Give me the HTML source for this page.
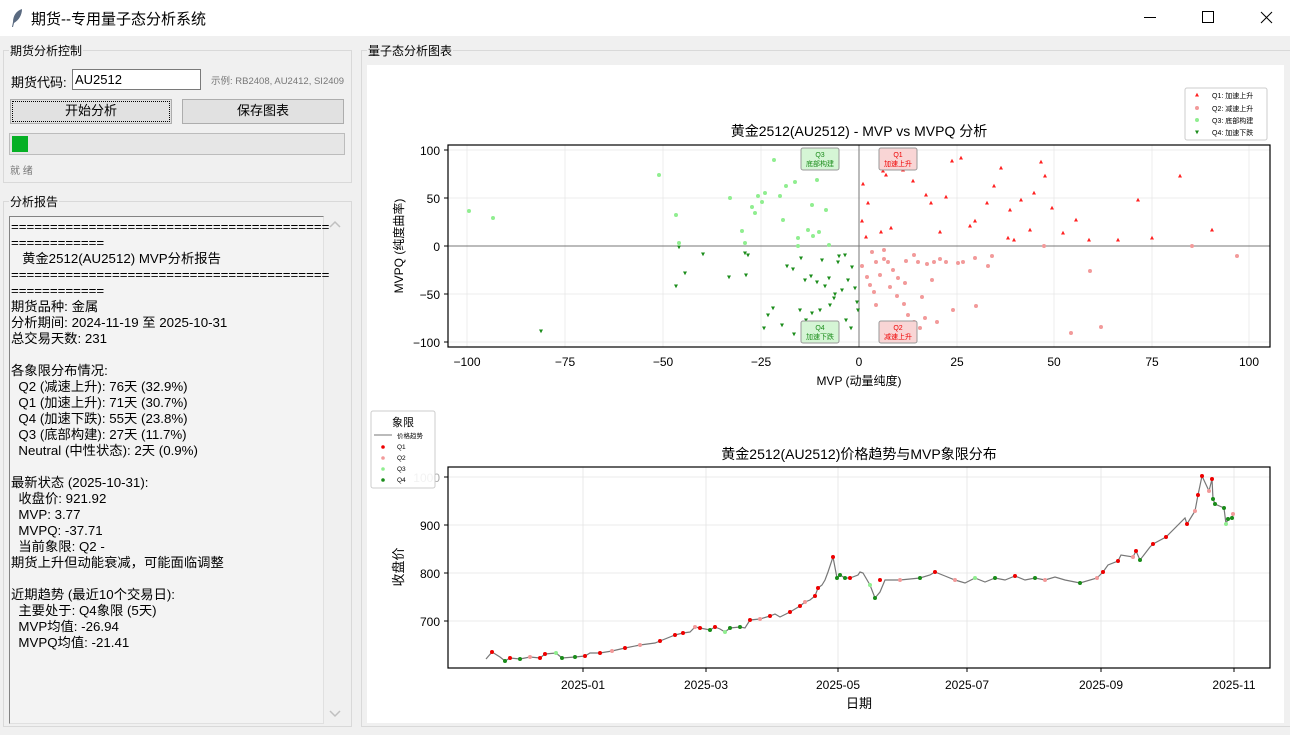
<!DOCTYPE html>
<html><head><meta charset="utf-8"><style>
*{margin:0;padding:0;box-sizing:border-box}
body{width:1290px;height:735px;background:#f0f0f0;font-family:"Liberation Sans","Noto Sans CJK SC",sans-serif;font-size:12px;color:#000;position:relative;overflow:hidden}
.abs{position:absolute}
.tb{left:0;top:0;width:1290px;height:36px;background:#fff}
.frame{border:1px solid #d9d9d9}
.lbl{background:#f0f0f0;padding:0 1px;font-size:12px}
.btn{background:#e1e1e1;border:1px solid #adadad;text-align:center;line-height:22px;font-size:13px}
.rep{font-size:13.3px;line-height:16px;white-space:pre;font-family:"Liberation Sans","Noto Sans CJK SC",sans-serif}
svg text{font-family:"Liberation Sans","Noto Sans CJK SC",sans-serif}
</style></head><body>
<div class="abs tb"></div>
<svg class="abs" style="left:10px;top:8px" width="14" height="20" viewBox="0 0 14 20"><path d="M12 1 C6 3 3 8 3 14 L2 19 L3 19 L4 15 C9 12 12 7 12 1Z" fill="#5a6a80"/></svg>
<div class="abs" style="left:31px;top:8px;font-size:15px">期货--专用量子态分析系统</div>
<svg class="abs" style="left:1140px;top:8px" width="140" height="20"><line x1="4" y1="9.5" x2="16" y2="9.5" stroke="#000"/><rect x="62.5" y="3.5" width="11" height="11" fill="none" stroke="#000"/><path d="M121 4 L132 15 M132 4 L121 15" stroke="#000"/></svg>

<!-- left control frame -->
<div class="abs frame" style="left:3px;top:50px;width:349px;height:133px"></div>
<div class="abs lbl" style="left:9px;top:42px">期货分析控制</div>
<div class="abs" style="left:11px;top:72px;font-size:13px">期货代码:</div>
<div class="abs" style="left:72px;top:69px;width:129px;height:21px;background:#fff;border:1px solid #7a7a7a;font-size:13px;line-height:19px;padding-left:2px">AU2512</div>
<div class="abs" style="left:211px;top:73px;font-size:9.5px;color:#777">示例: RB2408, AU2412, SI2409</div>
<div class="abs btn" style="left:10px;top:99px;width:162px;height:25px;outline:1px dotted #000;outline-offset:-3px">开始分析</div>
<div class="abs btn" style="left:182px;top:99px;width:162px;height:25px">保存图表</div>
<div class="abs" style="left:9px;top:133px;width:336px;height:22px;background:#e6e6e6;border:1px solid #bcbcbc"></div>
<div class="abs" style="left:12px;top:136px;width:16px;height:16px;background:#06b025"></div>
<div class="abs" style="left:10px;top:162px;font-size:10px;color:#777">就 绪</div>

<!-- report frame -->
<div class="abs frame" style="left:3px;top:201px;width:349px;height:526px"></div>
<div class="abs lbl" style="left:9px;top:193px">分析报告</div>
<div class="abs" style="left:9px;top:216px;width:315px;height:508px;background:#f3f3f3;border:1px solid #838383;border-right-color:#e0e0e0;border-bottom-color:#e0e0e0"></div>
<div class="abs rep" style="left:11px;top:219px">=========================================
============
   黄金2512(AU2512) MVP分析报告
=========================================
============
期货品种: 金属
分析期间: 2024-11-19 至 2025-10-31
总交易天数: 231

各象限分布情况:
  Q2 (减速上升): 76天 (32.9%)
  Q1 (加速上升): 71天 (30.7%)
  Q4 (加速下跌): 55天 (23.8%)
  Q3 (底部构建): 27天 (11.7%)
  Neutral (中性状态): 2天 (0.9%)

最新状态 (2025-10-31):
  收盘价: 921.92
  MVP: 3.77
  MVPQ: -37.71
  当前象限: Q2 -
期货上升但动能衰减，可能面临调整

近期趋势 (最近10个交易日):
  主要处于: Q4象限 (5天)
  MVP均值: -26.94
  MVPQ均值: -21.41</div>
<svg class="abs" style="left:326px;top:218px" width="18" height="505"><path d="M4 9 L9 4 L14 9" fill="none" stroke="#c0c0c0" stroke-width="1.5"/><path d="M4 493 L9 498 L14 493" fill="none" stroke="#c0c0c0" stroke-width="1.5"/></svg>

<!-- right frame -->
<div class="abs frame" style="left:361px;top:50px;width:930px;height:677px"></div>
<div class="abs lbl" style="left:367px;top:42px">量子态分析图表</div>
<svg class="abs" style="left:367px;top:65px" width="917" height="658" viewBox="367 65 917 658">
<defs>
<path id="tu" d="M0 -2.2 L2 1.5 L-2 1.5Z" fill="#ff2020"/>
<path id="td" d="M0 2.2 L2 -1.5 L-2 -1.5Z" fill="#1a8c1a"/>
<circle id="cp" r="2" fill="#f29a9a"/>
<circle id="cg" r="2" fill="#90ee90"/>
</defs>
<rect x="367" y="65" width="917" height="658" fill="#fff"/>
<!-- chart 1 -->
<g stroke="#e8e8e8" stroke-width="0.8">
<line x1="467" y1="145" x2="467" y2="347"/><line x1="663" y1="145" x2="663" y2="347"/><line x1="761" y1="145" x2="761" y2="347"/><line x1="565" y1="145" x2="565" y2="347"/><line x1="957" y1="145" x2="957" y2="347"/><line x1="1054" y1="145" x2="1054" y2="347"/><line x1="1152" y1="145" x2="1152" y2="347"/><line x1="1249" y1="145" x2="1249" y2="347"/>
<line x1="448" y1="150" x2="1270" y2="150"/><line x1="448" y1="198" x2="1270" y2="198"/><line x1="448" y1="294" x2="1270" y2="294"/><line x1="448" y1="342" x2="1270" y2="342"/>
</g>
<line x1="448" y1="246" x2="1270" y2="246" stroke="#777"/><line x1="859" y1="145" x2="859" y2="347" stroke="#777"/>
<g>
<use href="#cg" x="469" y="211"/><use href="#cg" x="493" y="218"/><use href="#cg" x="659" y="175"/><use href="#cg" x="676" y="215"/><use href="#cg" x="679" y="243"/><use href="#cg" x="730" y="198"/><use href="#cg" x="742" y="231"/><use href="#cg" x="752" y="207"/><use href="#cg" x="755" y="213"/><use href="#cg" x="758" y="196"/><use href="#cg" x="765" y="193"/><use href="#cg" x="774" y="160"/><use href="#cg" x="780" y="196"/><use href="#cg" x="783" y="220"/><use href="#cg" x="786" y="186"/><use href="#cg" x="795" y="182"/><use href="#cg" x="798" y="238"/><use href="#cg" x="808" y="230"/><use href="#cg" x="812" y="205"/><use href="#cg" x="817" y="180"/><use href="#cg" x="819" y="232"/><use href="#cg" x="826" y="210"/><use href="#cg" x="829" y="245"/><use href="#cg" x="745" y="243"/><use href="#cg" x="762" y="202"/><use href="#cg" x="798" y="246"/><use href="#cg" x="813" y="236"/>
<use href="#td" x="679" y="247"/><use href="#td" x="703" y="254"/><use href="#td" x="745" y="253"/><use href="#td" x="676" y="286"/><use href="#td" x="685" y="273"/><use href="#td" x="729" y="277"/><use href="#td" x="748" y="255"/><use href="#td" x="773" y="308"/><use href="#td" x="787" y="266"/><use href="#td" x="793" y="269"/><use href="#td" x="801" y="258"/><use href="#td" x="805" y="280"/><use href="#td" x="811" y="276"/><use href="#td" x="817" y="282"/><use href="#td" x="822" y="260"/><use href="#td" x="825" y="286"/><use href="#td" x="829" y="278"/><use href="#td" x="838" y="262"/><use href="#td" x="842" y="290"/><use href="#td" x="848" y="280"/><use href="#td" x="852" y="267"/><use href="#td" x="855" y="288"/><use href="#td" x="857" y="302"/><use href="#td" x="834" y="298"/><use href="#td" x="820" y="310"/><use href="#td" x="800" y="310"/><use href="#td" x="782" y="325"/><use href="#td" x="794" y="334"/><use href="#td" x="812" y="313"/><use href="#td" x="830" y="305"/><use href="#td" x="846" y="320"/><use href="#td" x="851" y="328"/><use href="#td" x="858" y="310"/><use href="#td" x="806" y="320"/><use href="#td" x="764" y="328"/><use href="#td" x="768" y="315"/><use href="#td" x="839" y="256"/><use href="#td" x="835" y="294"/><use href="#td" x="845" y="255"/><use href="#td" x="541" y="331"/><use href="#td" x="746" y="275"/>
<use href="#tu" x="863" y="184"/><use href="#tu" x="868" y="203"/><use href="#tu" x="883" y="171"/><use href="#tu" x="862" y="221"/><use href="#tu" x="866" y="237"/><use href="#tu" x="881" y="232"/><use href="#tu" x="886" y="175"/><use href="#tu" x="903" y="170"/><use href="#tu" x="913" y="181"/><use href="#tu" x="926" y="195"/><use href="#tu" x="931" y="203"/><use href="#tu" x="946" y="197"/><use href="#tu" x="952" y="161"/><use href="#tu" x="961" y="158"/><use href="#tu" x="970" y="226"/><use href="#tu" x="975" y="221"/><use href="#tu" x="987" y="203"/><use href="#tu" x="1001" y="168"/><use href="#tu" x="1010" y="210"/><use href="#tu" x="1014" y="240"/><use href="#tu" x="1021" y="200"/><use href="#tu" x="1034" y="193"/><use href="#tu" x="1045" y="176"/><use href="#tu" x="1052" y="208"/><use href="#tu" x="1063" y="233"/><use href="#tu" x="1076" y="220"/><use href="#tu" x="1089" y="240"/><use href="#tu" x="1118" y="240"/><use href="#tu" x="1138" y="200"/><use href="#tu" x="1152" y="238"/><use href="#tu" x="1180" y="176"/><use href="#tu" x="1212" y="230"/><use href="#tu" x="1041" y="162"/><use href="#tu" x="1030" y="230"/><use href="#tu" x="994" y="186"/><use href="#tu" x="891" y="228"/><use href="#tu" x="940" y="232"/><use href="#tu" x="896" y="163"/><use href="#tu" x="1008" y="238"/>
<use href="#cp" x="872" y="252"/><use href="#cp" x="884" y="259"/><use href="#cp" x="862" y="266"/><use href="#cp" x="876" y="262"/><use href="#cp" x="880" y="275"/><use href="#cp" x="888" y="262"/><use href="#cp" x="893" y="270"/><use href="#cp" x="898" y="278"/><use href="#cp" x="905" y="283"/><use href="#cp" x="906" y="261"/><use href="#cp" x="914" y="255"/><use href="#cp" x="918" y="262"/><use href="#cp" x="927" y="264"/><use href="#cp" x="934" y="262"/><use href="#cp" x="940" y="259"/><use href="#cp" x="946" y="262"/><use href="#cp" x="958" y="263"/><use href="#cp" x="963" y="262"/><use href="#cp" x="975" y="258"/><use href="#cp" x="988" y="266"/><use href="#cp" x="992" y="256"/><use href="#cp" x="867" y="277"/><use href="#cp" x="870" y="285"/><use href="#cp" x="874" y="292"/><use href="#cp" x="876" y="305"/><use href="#cp" x="890" y="287"/><use href="#cp" x="897" y="296"/><use href="#cp" x="904" y="304"/><use href="#cp" x="908" y="315"/><use href="#cp" x="914" y="322"/><use href="#cp" x="920" y="328"/><use href="#cp" x="925" y="318"/><use href="#cp" x="937" y="322"/><use href="#cp" x="953" y="310"/><use href="#cp" x="976" y="306"/><use href="#cp" x="1044" y="246"/><use href="#cp" x="1090" y="271"/><use href="#cp" x="1071" y="333"/><use href="#cp" x="1101" y="327"/><use href="#cp" x="1192" y="246"/><use href="#cp" x="1237" y="256"/><use href="#cp" x="922" y="297"/><use href="#cp" x="932" y="280"/><use href="#cp" x="884" y="250"/>
</g>
<g font-size="7" text-anchor="middle">
<rect x="801" y="148" width="38" height="22" rx="2" fill="#d5f5d5" stroke="#999"/><text x="820" y="157" fill="#1a8c1a">Q3</text><text x="820" y="166" fill="#1a8c1a">底部构建</text>
<rect x="879" y="148" width="38" height="22" rx="2" fill="#f9d5d5" stroke="#999"/><text x="898" y="157" fill="#e00">Q1</text><text x="898" y="166" fill="#e00">加速上升</text>
<rect x="801" y="321" width="38" height="22" rx="2" fill="#d5f5d5" stroke="#999"/><text x="820" y="330" fill="#1a8c1a">Q4</text><text x="820" y="339" fill="#1a8c1a">加速下跌</text>
<rect x="879" y="321" width="38" height="22" rx="2" fill="#f9d5d5" stroke="#999"/><text x="898" y="330" fill="#e00">Q2</text><text x="898" y="339" fill="#e00">减速上升</text>
</g>
<rect x="448" y="145" width="822" height="202" fill="none" stroke="#000" stroke-width="1.2"/>
<g font-size="12" text-anchor="middle">
<text x="467" y="366">−100</text><text x="565" y="366">−75</text><text x="663" y="366">−50</text><text x="761" y="366">−25</text><text x="859" y="366">0</text><text x="957" y="366">25</text><text x="1054" y="366">50</text><text x="1152" y="366">75</text><text x="1249" y="366">100</text>
</g>
<g font-size="12" text-anchor="end"><text x="440" y="155">100</text><text x="440" y="203">50</text><text x="440" y="251">0</text><text x="440" y="299">−50</text><text x="440" y="347">−100</text></g>
<g stroke="#000"><line x1="444" y1="150" x2="448" y2="150"/><line x1="444" y1="198" x2="448" y2="198"/><line x1="444" y1="246" x2="448" y2="246"/><line x1="444" y1="294" x2="448" y2="294"/><line x1="444" y1="342" x2="448" y2="342"/></g>
<text x="859" y="385" font-size="12" text-anchor="middle">MVP (动量纯度)</text>
<text transform="translate(403,246) rotate(-90)" font-size="12" text-anchor="middle">MVPQ (纯度曲率)</text>
<text x="859" y="136" font-size="14" text-anchor="middle">黄金2512(AU2512) - MVP vs MVPQ 分析</text>
<rect x="1185" y="88" width="82" height="52" rx="2" fill="#fff" stroke="#ccc"/>
<g font-size="7"><use href="#tu" x="1197" y="95"/><text x="1212" y="98">Q1: 加速上升</text><use href="#cp" x="1197" y="108"/><text x="1212" y="111">Q2: 减速上升</text><use href="#cg" x="1197" y="120"/><text x="1212" y="123">Q3: 底部构建</text><use href="#td" x="1197" y="132"/><text x="1212" y="135">Q4: 加速下跌</text></g>
<!-- chart 2 -->
<g stroke="#e4e4e4" stroke-width="0.8">
<line x1="583" y1="467" x2="583" y2="668"/><line x1="706" y1="467" x2="706" y2="668"/><line x1="838" y1="467" x2="838" y2="668"/><line x1="967" y1="467" x2="967" y2="668"/><line x1="1101" y1="467" x2="1101" y2="668"/><line x1="1234" y1="467" x2="1234" y2="668"/>
<line x1="448" y1="477" x2="1270" y2="477"/><line x1="448" y1="525" x2="1270" y2="525"/><line x1="448" y1="573" x2="1270" y2="573"/><line x1="448" y1="621" x2="1270" y2="621"/>
</g>
<polyline fill="none" stroke="#777" stroke-width="1.2" points="486,659 492,652 500,657 505,661 510,658 520,659 530,657 540,658 545,654 556,653 562,658 575,657 585,656 590,653 600,653 612,651 625,648 640,645 655,643 660,641 675,635 683,633 690,632 695,627 700,628 710,630 715,627 720,629 725,632 730,628 740,627 745,628 750,620 760,619 770,616 775,614 780,617 790,612 800,606 805,602 810,600 815,596 818,588 822,585 825,580 828,572 833,557 837,578 840,575 845,578 850,578 858,575 860,572 863,573 870,585 875,598 880,592 885,580 900,580 920,578 930,575 935,572 945,576 955,580 965,583 975,578 985,582 995,578 1005,580 1015,576 1025,580 1035,578 1045,580 1055,577 1065,580 1080,583 1097,578 1103,572 1108,565 1118,561 1121,555 1133,557 1136,551 1140,560 1150,547 1153,544 1166,537 1185,518 1187,524 1195,511 1198,495 1202,476 1209,491 1212,479 1213,499 1215,504 1224,508 1226,524 1228,519 1232,518 1233,514"/>
<g fill="#e00">
<circle cx="492" cy="652" r="2"/><circle cx="510" cy="658" r="2"/><circle cx="540" cy="658" r="2"/><circle cx="545" cy="654" r="2"/><circle cx="585" cy="656" r="2"/><circle cx="600" cy="653" r="2"/><circle cx="625" cy="648" r="2"/><circle cx="660" cy="641" r="2"/><circle cx="675" cy="635" r="2"/><circle cx="683" cy="633" r="2"/><circle cx="700" cy="628" r="2"/><circle cx="715" cy="627" r="2"/><circle cx="750" cy="620" r="2"/><circle cx="770" cy="616" r="2"/><circle cx="790" cy="612" r="2"/><circle cx="800" cy="606" r="2"/><circle cx="815" cy="596" r="2"/><circle cx="818" cy="588" r="2"/><circle cx="833" cy="557" r="2"/><circle cx="850" cy="578" r="2"/><circle cx="880" cy="580" r="2"/><circle cx="935" cy="572" r="2"/><circle cx="1015" cy="576" r="2"/><circle cx="1103" cy="572" r="2"/><circle cx="1118" cy="561" r="2"/><circle cx="1136" cy="551" r="2"/><circle cx="1153" cy="544" r="2"/><circle cx="1166" cy="537" r="2"/><circle cx="1187" cy="524" r="2"/><circle cx="1198" cy="495" r="2"/><circle cx="1202" cy="476" r="2"/><circle cx="1212" cy="479" r="2"/>
</g>
<g fill="#f29a9a"><circle cx="530" cy="657" r="2"/><circle cx="612" cy="651" r="2"/><circle cx="640" cy="645" r="2"/><circle cx="695" cy="627" r="2"/><circle cx="760" cy="619" r="2"/><circle cx="805" cy="602" r="2"/><circle cx="900" cy="580" r="2"/><circle cx="955" cy="580" r="2"/><circle cx="1045" cy="580" r="2"/><circle cx="1097" cy="578" r="2"/><circle cx="1133" cy="557" r="2"/><circle cx="1195" cy="511" r="2"/><circle cx="1209" cy="491" r="2"/><circle cx="1233" cy="514" r="2"/></g>
<g fill="#90ee90"><circle cx="556" cy="653" r="2"/><circle cx="725" cy="632" r="2"/><circle cx="870" cy="585" r="2"/><circle cx="975" cy="578" r="2"/><circle cx="1226" cy="524" r="2"/></g>
<g fill="#1a8c1a"><circle cx="505" cy="661" r="2"/><circle cx="520" cy="659" r="2"/><circle cx="562" cy="658" r="2"/><circle cx="575" cy="657" r="2"/><circle cx="710" cy="630" r="2"/><circle cx="730" cy="628" r="2"/><circle cx="740" cy="627" r="2"/><circle cx="837" cy="578" r="2"/><circle cx="840" cy="575" r="2"/><circle cx="845" cy="578" r="2"/><circle cx="875" cy="598" r="2"/><circle cx="920" cy="578" r="2"/><circle cx="995" cy="578" r="2"/><circle cx="1035" cy="578" r="2"/><circle cx="1080" cy="583" r="2"/><circle cx="1140" cy="560" r="2"/><circle cx="1213" cy="499" r="2"/><circle cx="1215" cy="504" r="2"/><circle cx="1224" cy="508" r="2"/><circle cx="1228" cy="519" r="2"/><circle cx="1232" cy="518" r="2"/></g>
<rect x="448" y="467" width="822" height="201" fill="none" stroke="#000" stroke-width="1.2"/>
<g stroke="#000"><line x1="444" y1="477" x2="448" y2="477"/><line x1="444" y1="525" x2="448" y2="525"/><line x1="444" y1="573" x2="448" y2="573"/><line x1="444" y1="621" x2="448" y2="621"/>
<line x1="583" y1="668" x2="583" y2="672"/><line x1="706" y1="668" x2="706" y2="672"/><line x1="838" y1="668" x2="838" y2="672"/><line x1="967" y1="668" x2="967" y2="672"/><line x1="1101" y1="668" x2="1101" y2="672"/><line x1="1234" y1="668" x2="1234" y2="672"/></g>
<g font-size="12" text-anchor="end"><text x="440" y="482" fill="#aaa">1000</text><text x="440" y="530">900</text><text x="440" y="578">800</text><text x="440" y="626">700</text></g>
<g font-size="12" text-anchor="middle"><text x="583" y="689">2025-01</text><text x="706" y="689">2025-03</text><text x="838" y="689">2025-05</text><text x="967" y="689">2025-07</text><text x="1101" y="689">2025-09</text><text x="1234" y="689">2025-11</text></g>
<text x="859" y="708" font-size="13" text-anchor="middle">日期</text>
<text transform="translate(403,567) rotate(-90)" font-size="13" text-anchor="middle">收盘价</text>
<text x="859" y="459" font-size="14" text-anchor="middle">黄金2512(AU2512)价格趋势与MVP象限分布</text>
<rect x="371" y="411" width="64" height="77" rx="2" fill="#fff" fill-opacity="0.85" stroke="#ccc"/>
<text x="403" y="426" font-size="11" text-anchor="middle">象限</text>
<line x1="374" y1="435" x2="392" y2="435" stroke="#777"/><text x="397" y="438" font-size="6.5">价格趋势</text>
<g font-size="6.5"><circle cx="383" cy="447" r="1.8" fill="#e00"/><text x="397" y="449">Q1</text><circle cx="383" cy="458" r="1.8" fill="#f29a9a"/><text x="397" y="460">Q2</text><circle cx="383" cy="469" r="1.8" fill="#90ee90"/><text x="397" y="471">Q3</text><circle cx="383" cy="480" r="1.8" fill="#1a8c1a"/><text x="397" y="482">Q4</text></g>
</svg>
</body></html>
